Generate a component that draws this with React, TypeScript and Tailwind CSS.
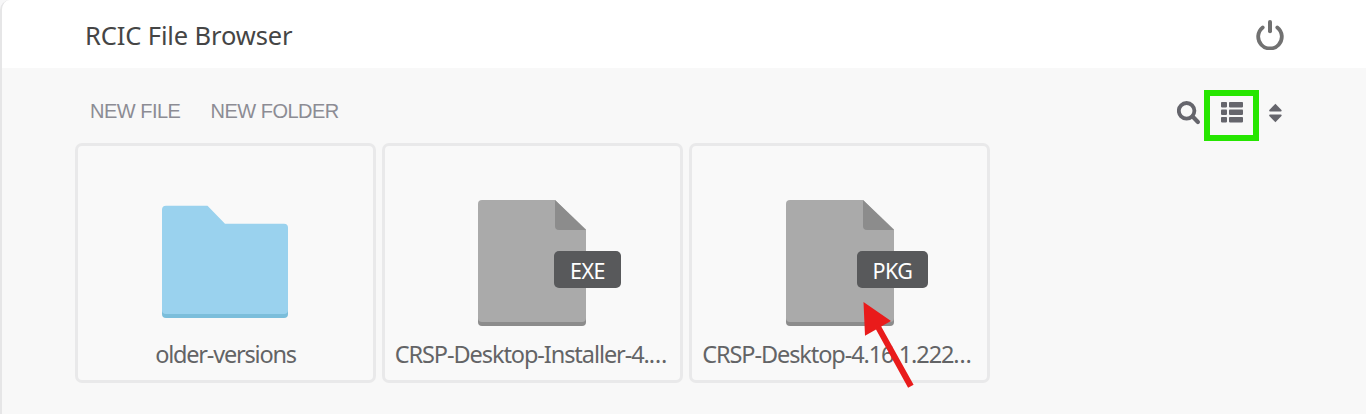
import React from "react";

type Entry = { name: string; badge?: string; nameClass: string; badgeClass?: string; iconClass: string };

const entries: Entry[] = [
  { name: "older-versions", nameClass: "tracking-[-1.2px]", iconClass: "pr-[2px]" },
  {
    name: "CRSP-Desktop-Installer-4.…",
    badge: "EXE",
    nameClass: "tracking-[-1.07px] pr-[4px]",
    badgeClass: "left-[169px] w-[67px]",
    iconClass: "pr-[2px]",
  },
  {
    name: "CRSP-Desktop-4.16.1.222…",
    badge: "PKG",
    nameClass: "tracking-[-1.08px] pr-[6px]",
    badgeClass: "left-[165px] w-[71px]",
    iconClass: "pr-0",
  },
];

function FolderIcon() {
  return (
    <svg width="126" height="113" viewBox="0 0 126 113" className="mt-[59px] block">
      <path d="M0 60H126V109Q126 113 122 113H4Q0 113 0 109Z" fill="#7bbedb" />
      <path d="M4 .7H45.5L63 18.7H122Q126 18.7 126 22.7V105Q126 109 122 109H4Q0 109 0 105V4.7Q0 .7 4 .7Z" fill="#9ad2ee" />
    </svg>
  );
}

function FileIcon() {
  return (
    <svg width="108" height="126" viewBox="0 0 108 126" className="mt-[54px] block">
      <path d="M0 60H108V122Q108 126 104 126H4Q0 126 0 122Z" fill="#8c8c8c" />
      <path d="M4 0H77L108 29.5V118Q108 122 104 122H4Q0 122 0 118V4Q0 0 4 0Z" fill="#aaaaaa" />
      <path d="M77 0L108 30H81Q77 30 77 26Z" fill="#8c8c8c" />
    </svg>
  );
}

function Card({ entry }: { entry: Entry }) {
  return (
    <div className="relative flex h-[240px] w-[301px] flex-col items-center rounded-[7px] border-[3px] border-[#e9e9ea] bg-[#f9f9f9]">
      <div className={`flex h-[192px] items-start ${entry.iconClass}`}>{entry.badge ? <FileIcon /> : <FolderIcon />}</div>
      {entry.badge && (
        <div className={`absolute top-[105px] flex h-[37px] items-center justify-center rounded-[5px] bg-[#58595b] pt-[3px] text-[21.5px] leading-none text-white ${entry.badgeClass}`}>
          <span className="tracking-[-0.5px]">{entry.badge}</span>
        </div>
      )}
      <div className={`whitespace-nowrap text-[23.5px] leading-8 text-[#636466] ${entry.nameClass}`}>{entry.name}</div>
    </div>
  );
}

export default function App() {
  return (
    <div className="h-[414px] w-full overflow-hidden bg-[#f7f7f8] font-['Noto_Sans','Open_Sans',sans-serif]">
      <main className="relative h-[414px] overflow-hidden rounded-tl-[10px] border-l-2 border-[#e6e6e7] bg-[#f8f8f8]">
        <header className="flex h-[68px] items-center justify-between bg-white pr-[82px] pl-[83px]">
          <h1 className="pt-0.5 text-[25.5px] leading-9 tracking-[-0.12px] text-[#454545]">RCIC File Browser</h1>
          <svg width="28" height="30" viewBox="0 0 28 30" fill="none" stroke="#717171" strokeLinecap="round" className="mt-px">
            <path d="M6.7 7.4A11.8 11.8 0 1 0 21.3 7.4" strokeWidth="3.8" />
            <path d="M14 2V11.2" strokeWidth="4" />
          </svg>
        </header>

        <div className="flex h-[75px] items-center justify-between pr-[84px] pl-[88px]">
          <nav className="flex gap-[30px] pt-[11px] font-['Liberation_Sans',Arial,sans-serif] text-[20px] leading-6 tracking-[-0.5px] text-[#8c8c94]">
            <button>NEW FILE</button>
            <button>NEW FOLDER</button>
          </nav>
          <div className="flex items-center pt-[15px]">
            <svg width="24" height="24" viewBox="0 0 24 24" fill="none" stroke="#65656c">
              <circle cx="9.6" cy="9.8" r="7.8" strokeWidth="3.8" />
              <path d="M15.6 15.6L20.9 20.9" strokeWidth="4.2" strokeLinecap="round" />
            </svg>
            <div className="mt-[5px] ml-[3px] flex h-[51px] w-[55px] items-start justify-center border-[6px] border-[#26e600] pt-[6px]">
              <svg width="22" height="21" viewBox="0 0 22 21" fill="#65656c">
                <rect width="6" height="5.4" rx="0.8" />
                <rect x="8" width="14" height="5.4" rx="0.8" />
                <rect y="7.5" width="6" height="5.4" rx="0.8" />
                <rect x="8" y="7.5" width="14" height="5.4" rx="0.8" />
                <rect y="15" width="6" height="5.4" rx="0.8" />
                <rect x="8" y="15" width="14" height="5.4" rx="0.8" />
              </svg>
            </div>
            <svg width="14" height="20" viewBox="-.4 0 14 20" fill="#65656c" className="ml-[9px]">
              <path d="M7 .7L13.3 7.2Q13.3 8.5 12.3 8.5H1.7Q.7 8.5 .7 7.2Z" />
              <path d="M7 19.3L13.3 12.8Q13.3 11.5 12.3 11.5H1.7Q.7 11.5 .7 12.8Z" />
            </svg>
          </div>
        </div>

        <section className="flex gap-[6px] pl-[73px]">
          {entries.map((entry) => (
            <Card key={entry.name} entry={entry} />
          ))}
        </section>

        <svg width="52" height="88" viewBox="0 0 52 88" fill="#e91b1b" className="absolute top-[301px] left-[861px]">
          <path d="M.5 1L28 20L18.2 25.5L50.6 83.7L45.1 86.7L13 28.6L2 34.7Z" />
        </svg>
      </main>
    </div>
  );
}
